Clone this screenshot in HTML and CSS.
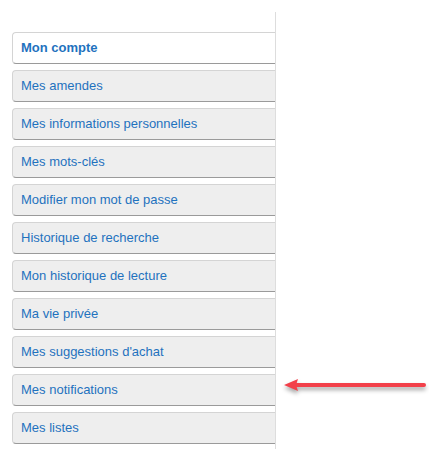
FILE: index.html
```html
<!DOCTYPE html>
<html lang="fr">
<head>
<meta charset="utf-8">
<title>Mon compte</title>
<link rel="stylesheet" href="styles.css">
</head>
<body>
<nav class="account-nav">
  <ul class="tabs">
    <li class="tab active"><a href="#">Mon compte</a></li>
    <li class="tab"><a href="#">Mes amendes</a></li>
    <li class="tab"><a href="#">Mes informations personnelles</a></li>
    <li class="tab"><a href="#">Mes mots-clés</a></li>
    <li class="tab"><a href="#">Modifier mon mot de passe</a></li>
    <li class="tab"><a href="#">Historique de recherche</a></li>
    <li class="tab"><a href="#">Mon historique de lecture</a></li>
    <li class="tab"><a href="#">Ma vie privée</a></li>
    <li class="tab"><a href="#">Mes suggestions d'achat</a></li>
    <li class="tab"><a href="#">Mes notifications</a></li>
    <li class="tab"><a href="#">Mes listes</a></li>
  </ul>
</nav>
<svg class="arrow" width="150" height="24" viewBox="0 0 150 24" aria-hidden="true">
  <path d="M15 10 L143 10" stroke="#f2404a" stroke-width="4" stroke-linecap="round"/>
  <path d="M3 10 L17 4 L15 10 L17 16 Z" fill="#f2404a"/>
</svg>
</body>
</html>
```
FILE: styles.css
```css
html, body {
  margin: 0;
  padding: 0;
  background: #ffffff;
}
body {
  font-family: "Liberation Sans", Arial, sans-serif;
  font-size: 13px;
  position: relative;
  height: 449px;
  overflow: hidden;
}
.account-nav {
  margin: 12px 0 0 12px;
  width: 264px;
  border-right: 1px solid #dddddd;
  padding-top: 20px;
  height: 437px;
  box-sizing: border-box;
}
.tabs {
  list-style: none;
  margin: 0;
  padding: 0;
  display: flex;
  flex-direction: column;
  gap: 6px;
}
.tab {
  height: 32px;
  box-sizing: border-box;
  background: #eeeeee;
  border: 1px solid #d4d4d4;
  border-right: none;
  border-bottom: 1px solid #9a9a9a;
  border-radius: 4px 0 0 4px;
  display: flex;
  align-items: center;
  padding-left: 8px;
  padding-bottom: 1px;
}
.tab a {
  color: #1f72be;
  text-decoration: none;
  line-height: 16px;
}
.tab.active {
  background: #ffffff;
}
.tab.active a {
  font-weight: bold;
}
.arrow {
  position: absolute;
  left: 281px;
  top: 375px;
  filter: drop-shadow(0 3px 2px rgba(0,0,0,0.35));
}
```
